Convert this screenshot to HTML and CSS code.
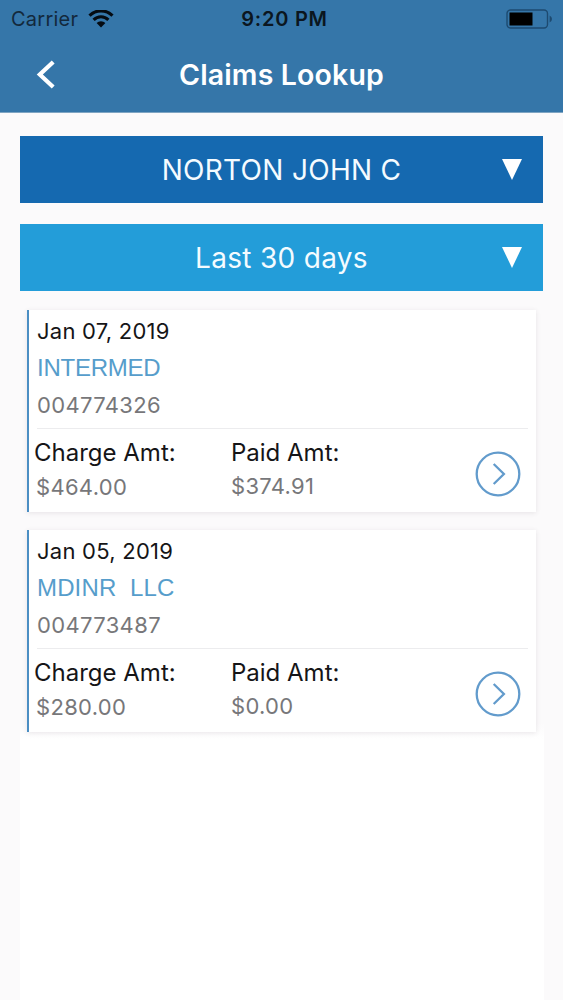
FILE: index.html
```html
<!DOCTYPE html>
<html lang="en">
<head>
    <meta charset="UTF-8">
    <meta name="viewport" content="width=device-width, initial-scale=1.0">
    <title>Claims Lookup</title>
    <link rel="stylesheet" href="styles.css">
</head>
<body>
    <header class="header">
        <div class="status-bar">
            <div class="status-left">
                <span class="carrier">Carrier</span>
                <svg class="wifi" width="26" height="18" viewBox="0 0 26 18">
                    <path d="M1.5 5.6a16.3 16.3 0 0 1 23 0M5.6 9.8a10.5 10.5 0 0 1 14.8 0" fill="none" stroke="#050b12" stroke-width="3.1"/>
                    <path d="M8.6 13.1a6.3 6.3 0 0 1 8.8 0L13 17.4z" fill="#050b12"/>
                </svg>
            </div>
            <span class="time">9:20 PM</span>
            <svg class="battery" width="47" height="20" viewBox="0 0 47 20">
                <rect x="1" y="1" width="40.5" height="18" rx="3.5" fill="none" stroke="#1d4a70" stroke-width="1.4"/>
                <rect x="3.5" y="3.5" width="23" height="13" fill="#000"/>
                <path d="M43.6 6.5q2.4 1 2.4 3.5t-2.4 3.5z" fill="#1d4a70"/>
            </svg>
        </div>
        <div class="nav-bar">
            <a href="#" class="back-btn" aria-label="Back">
                <svg width="22" height="30" viewBox="0 0 22 30">
                    <path d="M18.2 2L4.8 14.5L18.2 27" fill="none" stroke="#fff" stroke-width="4.2"/>
                </svg>
            </a>
            <h1>Claims Lookup</h1>
        </div>
    </header>

    <main class="content">
        <button class="select member">
            <span class="member-name">NORTON JOHN C</span>
            <svg class="caret" width="20" height="21" viewBox="0 0 20 21"><path d="M0 0h20L10 21z" fill="#fff"/></svg>
        </button>
        <button class="select period">
            <span class="period-name">Last 30 days</span>
            <svg class="caret" width="20" height="21" viewBox="0 0 20 21"><path d="M0 0h20L10 21z" fill="#fff"/></svg>
        </button>

        <section class="claim">
            <div class="claim-top">
                <div class="date">Jan 07, 2019</div>
                <div class="provider">INTERMED</div>
                <div class="number">004774326</div>
            </div>
            <div class="claim-bottom">
                <div class="charge">
                    <div class="label">Charge Amt:</div>
                    <div class="amount">$464.00</div>
                </div>
                <div class="paid">
                    <div class="label">Paid Amt:</div>
                    <div class="amount">$374.91</div>
                </div>
                <svg class="details" width="46" height="46" viewBox="0 0 46 46">
                    <circle cx="23" cy="23" r="21.3"/>
                    <path d="M18.7 13L28.9 23L18.7 33"/>
                </svg>
            </div>
        </section>

        <section class="claim">
            <div class="claim-top">
                <div class="date">Jan 05, 2019</div>
                <div class="provider wide">MDINR&nbsp; LLC</div>
                <div class="number">004773487</div>
            </div>
            <div class="claim-bottom">
                <div class="charge">
                    <div class="label">Charge Amt:</div>
                    <div class="amount">$280.00</div>
                </div>
                <div class="paid">
                    <div class="label">Paid Amt:</div>
                    <div class="amount">$0.00</div>
                </div>
                <svg class="details" width="46" height="46" viewBox="0 0 46 46">
                    <circle cx="23" cy="23" r="21.3"/>
                    <path d="M18.7 13L28.9 23L18.7 33"/>
                </svg>
            </div>
        </section>
    </main>
</body>
</html>
```
FILE: styles.css
```css
* {
    box-sizing: border-box;
}

body {
    margin: 0;
    height: 100vh;
    display: flex;
    flex-direction: column;
    background-color: #fbfafb;
    font-family: Inter, "Liberation Sans", sans-serif;
    color: #151517;
}

.header {
    height: 113px;
    background-color: #3576a9;
    border-bottom: 1px solid #7fa5c3;
}

.status-bar {
    height: 37px;
    padding: 0 10px 0 11px;
    display: grid;
    grid-template-columns: 1fr auto 1fr;
    align-items: center;
    color: #0b1620;
}

.status-left {
    display: flex;
    align-items: center;
    gap: 10px;
}

.carrier {
    font-size: 20px;
    letter-spacing: 0.25px;
    line-height: 38px;
    color: #13293c;
}

.time {
    padding-left: 5px;
    font-size: 20px;
    font-weight: 600;
    letter-spacing: 0.75px;
    line-height: 38px;
}

.battery {
    justify-self: end;
    margin-top: -1px;
}

.nav-bar {
    height: 76px;
    padding: 0 35px;
    display: grid;
    grid-template-columns: 1fr auto 1fr;
    align-items: center;
}

.back-btn {
    height: 30px;
}

h1 {
    margin: 0;
    font-size: 28.5px;
    font-weight: 600;
    letter-spacing: 0.15px;
    line-height: 76px;
    color: #fff;
}

.content {
    flex: 1;
    width: 524px;
    margin-left: 20px;
    padding-top: 23px;
    background: linear-gradient(to bottom, #fbfafb 610px, #fff 626px);
}

.select {
    width: 523px;
    height: 67px;
    margin: 0 0 21px;
    padding: 0 21px;
    display: grid;
    grid-template-columns: 20px 1fr 20px;
    align-items: center;
    border: none;
    font-family: inherit;
    font-size: 28px;
    letter-spacing: 0.3px;
    color: #f4fbff;
}

.select span {
    grid-column: 2;
}

.member {
    background-color: #1569b0;
}

.period {
    background-color: #239dd9;
}

.claim {
    height: 202px;
    margin: 0 8px 18px 7px;
    border-left: 2px solid #4b8ec3;
    background-color: #fff;
    box-shadow: 0 1px 5px rgba(60, 50, 60, 0.11);
}

.select + .claim {
    margin-top: -2px;
}

.claim-top {
    height: 119px;
    margin: 0 8px 0 8px;
    padding-top: 3px;
    border-bottom: 1px solid #ececee;
}

.date {
    font-size: 22px;
    letter-spacing: 0.25px;
    line-height: 36px;
}

.provider {
    font-family: "Liberation Sans", sans-serif;
    font-size: 24px;
    letter-spacing: -0.25px;
    line-height: 37px;
    color: #569dcb;
}

.wide {
    letter-spacing: 0.15px;
}

.number {
    font-size: 22px;
    letter-spacing: 0.35px;
    line-height: 38px;
    color: #77777a;
}

.claim-bottom {
    height: 83px;
    padding: 7px 15px 0 5px;
    display: flex;
}

.charge {
    width: 197px;
}

.paid {
    flex: 1;
}

.label {
    font-size: 24px;
    line-height: 34px;
}

.amount {
    font-size: 22px;
    letter-spacing: 0.3px;
    line-height: 32px;
    color: #77777a;
}

.charge .amount {
    padding: 1px 0 0 2px;
}

.details {
    margin-top: 15px;
    fill: none;
    stroke: #629bcc;
    stroke-width: 2.3;
}
```
